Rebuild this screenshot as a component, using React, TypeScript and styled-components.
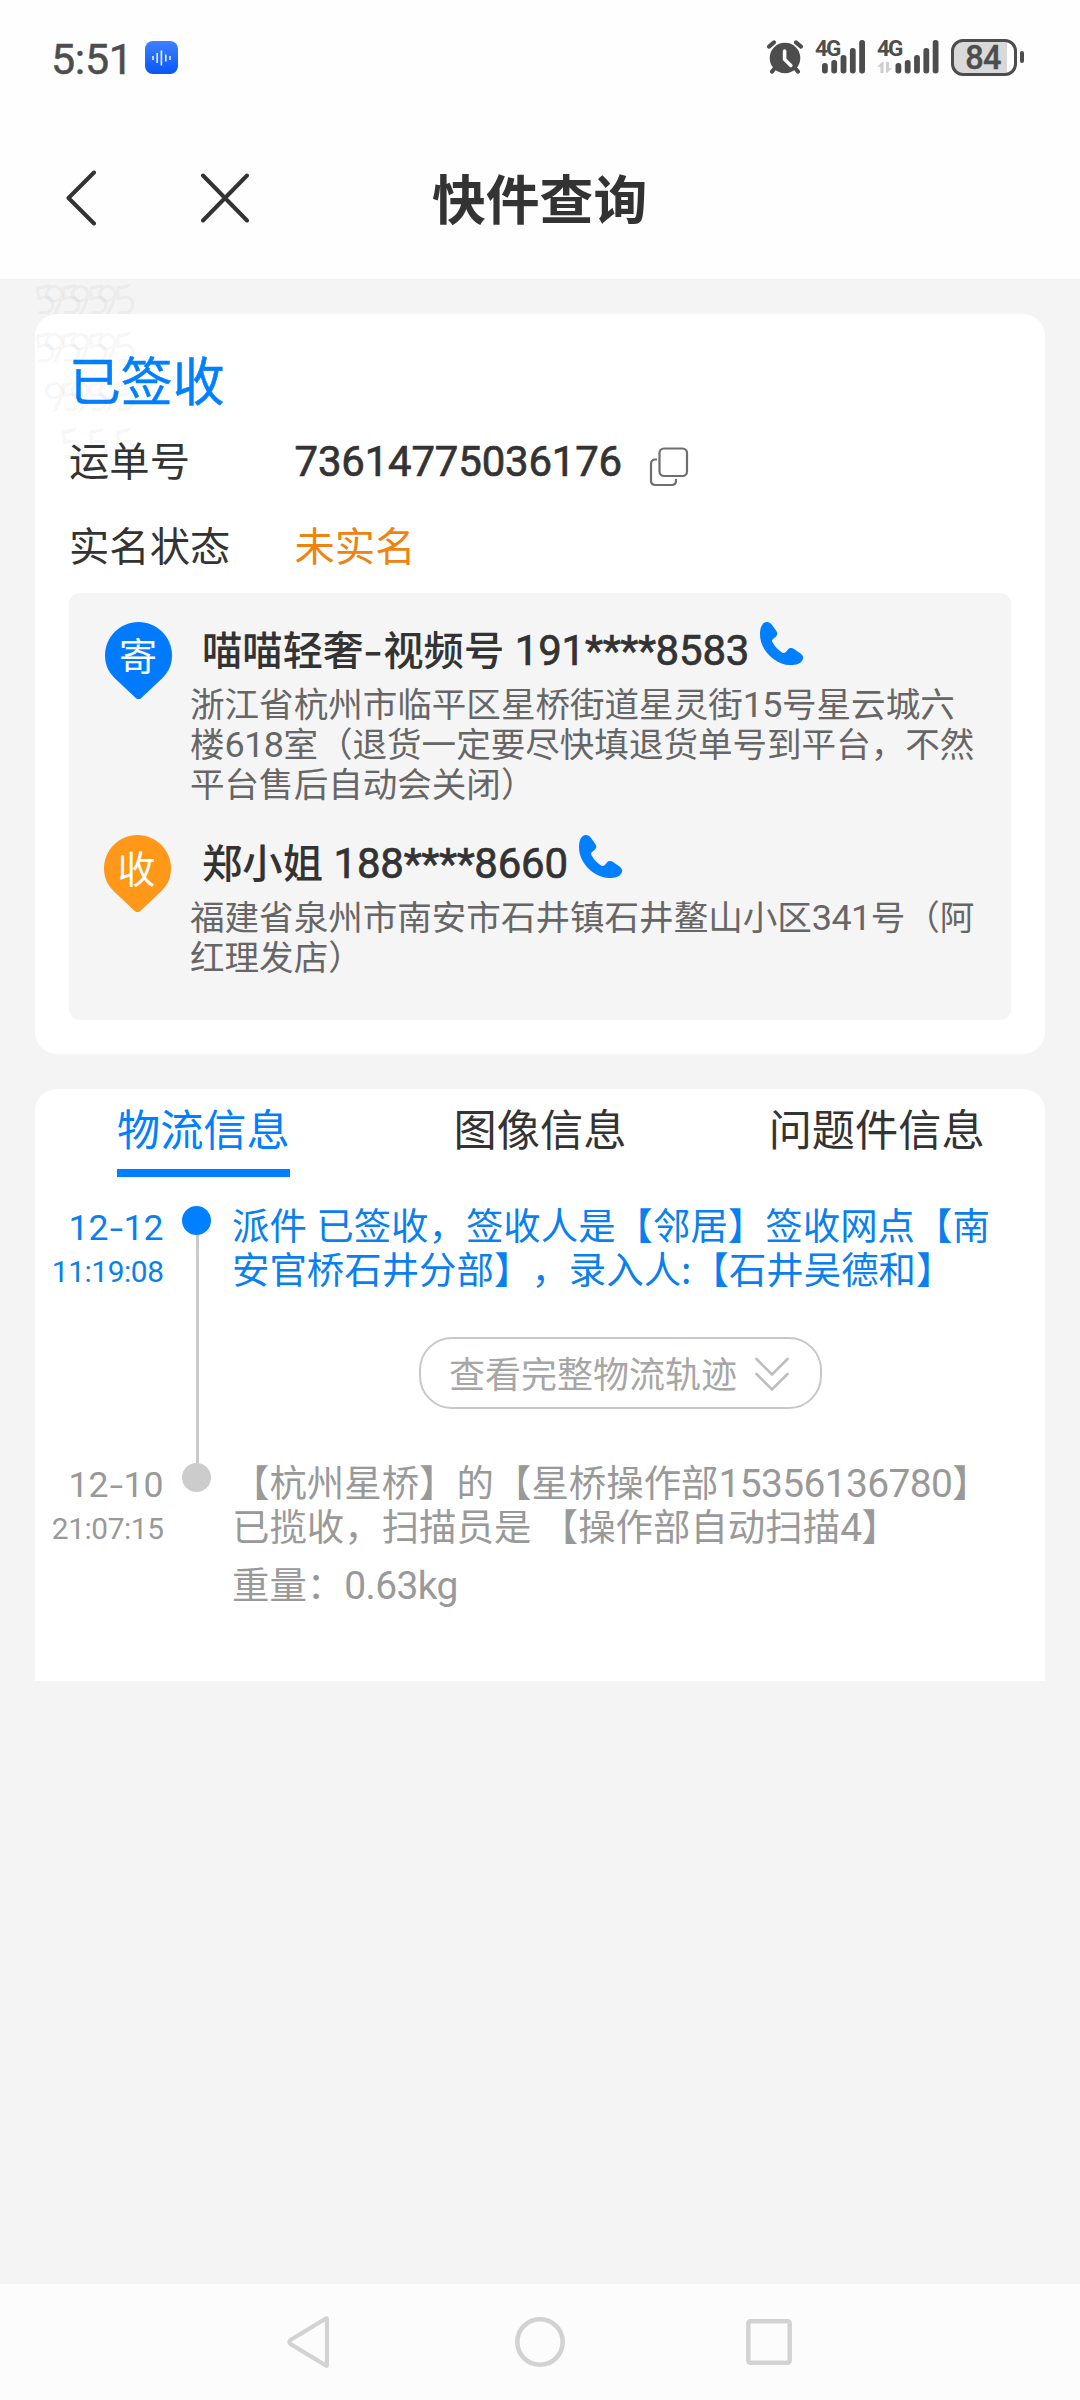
import React from "react";
import styled, { createGlobalStyle } from "styled-components";

const CJK = '"Noto Sans CJK SC", "Noto Sans", sans-serif';
const LATIN = 'Roboto, "Noto Sans", sans-serif';
const BLUE = "#0080ff";
const INK = "#333333";

const GlobalStyle = createGlobalStyle`
  * { box-sizing: border-box; }
  body {
    margin: 0;
    background: #f4f4f4;
    font-family: ${CJK};
    color: ${INK};
    text-spacing-trim: space-all;
  }
  svg { display: block; flex: none; }
`;

const Screen = styled.div`
  width: 1080px;
  height: 2400px;
  display: flex;
  flex-direction: column;
  overflow: hidden;
`;

const StatusBar = styled.div`
  height: 116px;
  padding: 0 56px 2px 51px;
  background: #fefefe;
  display: flex;
  align-items: center;
  justify-content: space-between;
`;

const StatusSide = styled.div<{ $gap: number }>`
  display: flex;
  align-items: center;
  gap: ${(p) => p.$gap}px;
`;

const Clock = styled.span`
  width: 79px;
  font: 400 43px/50px ${LATIN};
  letter-spacing: -0.3px;
  color: #4d4d4d;
  -webkit-text-stroke: 0.5px #4d4d4d;
  padding-top: 3px;
  white-space: nowrap;
`;

const SignalBox = styled.div`
  position: relative;
  height: 34px;
`;

const SignalLabel = styled.span`
  position: absolute;
  left: 0;
  top: -1px;
  font: 700 22.5px/18px ${LATIN};
  letter-spacing: -1.8px;
  color: #4d4d4d;
`;

const Battery = styled.div`
  width: 66px;
  height: 37px;
  padding-right: 2px;
  border: 3px solid #4d4d4d;
  border-radius: 12px;
  background: linear-gradient(to right, #d9d9d9 53px, #fefefe 53px);
  font: 500 32.5px/32px ${LATIN};
  letter-spacing: -0.8px;
  color: #4d4d4d;
  -webkit-text-stroke: 0.4px #4d4d4d;
  text-align: center;
`;

const BatteryTip = styled.div`
  width: 4px;
  height: 12px;
  border-radius: 2px;
  background: #4d4d4d;
`;

const NavBar = styled.header`
  height: 163px;
  padding-left: 66px;
  background: #fefefe;
  display: grid;
  grid-template-columns: 135px 231px 1fr;
  align-items: center;
`;

const Title = styled.h1`
  margin: -1px 0 0;
  font-size: 53.8px;
  line-height: 74px;
  font-weight: 700;
`;

const Content = styled.main`
  position: relative;
  flex: 1;
  padding: 35px 35px 0;
  display: flex;
  flex-direction: column;
  gap: 35px;
`;

const Watermark = styled.div`
  position: absolute;
  left: 0;
  top: 0;
  width: 150px;
  height: 190px;
  pointer-events: none;
`;

const WatermarkDigit = styled.span<{ $x: number; $y: number }>`
  position: absolute;
  left: ${(p) => p.$x - 2}px;
  top: ${(p) => p.$y}px;
  font: 400 40px/32px Lato, sans-serif;
  transform: rotate(-12deg);
  color: rgba(0, 0, 0, 0.055);
`;

const SummaryCard = styled.section`
  height: 740px;
  padding: 30px 34.5px 34px 34px;
  background: #fff;
  border-radius: 22px;
`;

const SignedStatus = styled.div`
  font-size: 51.84px;
  line-height: 70px;
  color: ${BLUE};
  -webkit-text-stroke: 0.5px ${BLUE};
`;

const Fields = styled.dl`
  margin: 2px 0 6px;
`;

const Field = styled.div`
  height: 85.5px;
  display: grid;
  grid-template-columns: 225.5px 1fr;
  align-items: center;
  font-size: 40.32px;
  line-height: 58px;
`;

const FieldLabel = styled.dt``;

const FieldValue = styled.dd<{ $tone?: string; $drop?: number }>`
  margin: 0;
  padding-top: ${(p) => p.$drop ?? 0}px;
  display: flex;
  align-items: center;
  color: ${(p) => p.$tone ?? INK};
`;

const Num = styled.span<{ $medium?: boolean }>`
  font-family: ${LATIN};
  font-size: 1.04em;
  line-height: 0;
  font-weight: 400;
  letter-spacing: ${(p) => (p.$medium ? "-0.004em" : "-0.016em")};
  -webkit-text-stroke: ${(p) => (p.$medium ? "0.7px currentColor" : "0")};
`;

const CopyButton = styled.button`
  margin: 5px 0 -5px 26.5px;
  padding: 0;
  border: 0;
  background: none;
`;

const AddressPanel = styled.div`
  height: 427px;
  padding: 28.5px 0 0 36px;
  background: #f5f5f5;
  border-radius: 11px;
`;

const Party = styled.article`
  height: 213.2px;
  display: grid;
  grid-template-columns: 85px 1fr;
`;

const Pin = styled.div<{ $shift: number }>`
  position: relative;
  width: 67px;
  height: 78px;
  margin-left: ${(p) => p.$shift}px;
`;

const PinLabel = styled.span`
  position: absolute;
  left: 0;
  top: 4px;
  width: 66px;
  text-align: center;
  font-size: 38px;
  line-height: 56px;
  color: #fff;
`;

const PartyHead = styled.div`
  display: flex;
  align-items: flex-start;
  height: 52px;
  padding-left: 12px;
  margin-bottom: 8px;
`;

const PartyName = styled.span<{ $width: number }>`
  width: ${(p) => p.$width}px;
  font-size: 40.32px;
  line-height: 51px;
  font-weight: 500;
  word-spacing: 1.5px;
  white-space: nowrap;
`;

const Dash = styled.span<{ $width: number }>`
  display: inline-block;
  width: ${(p) => p.$width}px;
  text-align: center;
  line-height: 0;
  letter-spacing: 0;
  transform: scaleX(1.35);
`;

const Stars = styled.span`
  letter-spacing: -0.4px;
`;

const AddressLine = styled.div`
  font-size: 34.56px;
  line-height: 40px;
  color: #666;
  white-space: nowrap;
`;

const TrackCard = styled.section`
  height: 592px;
  background: #fff;
  border-radius: 22px 22px 0 0;
`;

const Tabs = styled.nav`
  display: grid;
  grid-template-columns: repeat(3, 1fr);
  justify-items: center;
  height: 88px;
`;

const Tab = styled.div<{ $active?: boolean }>`
  font-size: 43.2px;
  line-height: 76px;
  height: 88px;
  padding-bottom: 4px;
  color: ${(p) => (p.$active ? BLUE : INK)};
  border-bottom: 8px solid ${(p) => (p.$active ? BLUE : "transparent")};
`;

const Timeline = styled.div`
  padding-top: 29px;
`;

const Event = styled.div<{ $tone: string; $height: number }>`
  height: ${(p) => p.$height}px;
  display: grid;
  grid-template-columns: 128.5px 28.5px 1fr;
  column-gap: 18px;
  color: ${(p) => p.$tone};
`;

const When = styled.div`
  text-align: right;
  white-space: nowrap;
`;

const Day = styled.div`
  font: 400 35.6px/44px ${LATIN};
  letter-spacing: 0;
`;

const Time = styled.div`
  font: 400 29.8px/43px ${LATIN};
  letter-spacing: -0.4px;
`;

const Rail = styled.div`
  display: flex;
  flex-direction: column;
`;

const Dot = styled.div<{ $color: string }>`
  width: 29px;
  height: 29px;
  border-radius: 50%;
  background: ${(p) => p.$color};
`;

const Line = styled.div`
  flex: 1;
  width: 3px;
  margin-left: 14.5px;
  background: #cacaca;
`;

const Detail = styled.div`
  margin: -4px 0 0 4px;
`;

const DetailLine = styled.div<{ $gap?: number }>`
  margin-top: ${(p) => p.$gap ?? 0}px;
  font-size: 37.44px;
  line-height: 44.3px;
  word-spacing: 1px;
  white-space: nowrap;
`;

const MoreButton = styled.button`
  width: 403px;
  height: 72px;
  margin: 46px 0 0 187px;
  padding: 0 0 2px 28px;
  display: flex;
  align-items: center;
  gap: 17px;
  background: #fff;
  border: 2px solid #c8c8c8;
  border-radius: 33px;
  font-family: ${CJK};
  font-size: 36px;
  line-height: 52px;
  color: #a6a6a6;
`;

const MoreIcon = styled.svg`
  margin-top: 5px;
`;

const SystemNav = styled.footer`
  height: 116px;
  padding: 0 288px 0 287px;
  background: #fcfcfc;
  display: grid;
  grid-template-columns: 228px 1fr auto;
  align-items: center;
`;

const VoiceIcon = () => (
  <svg width="33" height="33" viewBox="0 0 33 33">
    <defs>
      <linearGradient id="voice" x1="0" y1="0" x2="0" y2="1">
        <stop offset="0" stopColor="#3f80ff" />
        <stop offset="1" stopColor="#0656fa" />
      </linearGradient>
    </defs>
    <rect width="33" height="33" rx="8" fill="url(#voice)" />
    <path
      d="M8 15v4M12.2 12v10M16.4 9.5v15M20.8 13.5v7M25 15v4"
      stroke="#e8f1ff"
      strokeWidth="1.6"
    />
  </svg>
);

const AlarmIcon = () => (
  <svg width="36" height="34" viewBox="0 0 36 34">
    <circle cx="18" cy="18" r="15.3" fill="#4d4d4d" />
    <g stroke="#4d4d4d" strokeWidth="4" strokeLinecap="round" fill="none">
      <path d="M2 6.6L7 2.4M34 6.6L29 2.4M8 28L5 31.6M28 28L31 31.6" />
    </g>
    <path d="M17.6 11v8.2l6.2 6.2" fill="none" stroke="#fefefe" strokeWidth="3.6" strokeLinecap="round" strokeLinejoin="round" />
  </svg>
);

const BAR_TOPS = [23, 20, 15, 8, 0];

const Signal = ({ width, first, data }: { width: number; first: number; data?: boolean }) => (
  <SignalBox>
    <svg width={width} height="34" viewBox={`0 0 ${width} 34`}>
      {BAR_TOPS.map((top, i) => (
        <rect key={top} x={first + i * 9.3} y={top} width="5.8" height={33.4 - top} rx="2.7" fill="#4d4d4d" />
      ))}
      {data && <path d="M0 27l5-5h1.6v11H3.4v-6zM9 22h3v6h3l-5 5H9z" fill="#cfcfcf" />}
    </svg>
    <SignalLabel>4G</SignalLabel>
  </SignalBox>
);

const PhoneIcon = () => (
  <svg width="44" height="44" viewBox="0 0 44 44">
    <path
      fill={BLUE}
      d="M7 0C9 0 10.5 1 11.5 2.3L16 8.5C18 11.5 17.5 13 15.5 15L13 17C11.5 18.5 12 19.5 12.8 20.8C15.5 25.5 19 28.7 22 30.5C23.5 31.5 24.8 31.2 25.8 30L28 27.5C29.5 25.8 32 25.7 34 27L40.5 31.5C43 33.3 43.8 35.5 42.6 38C40.5 42 35 43.3 29.5 43.1C17 42.5 0 30 0 12C0 6 2 0 7 0Z"
    />
  </svg>
);

const MapPin = ({ label, color, shift = 0 }: { label: string; color: string; shift?: number }) => (
  <Pin $shift={shift}>
    <svg width="67" height="78" viewBox="0 0 67 78">
      <path fill={color} d="M33.5 0C52 0 67 15 67 33.5C67 44 62.5 51 57 56.5L36 76.2Q33.5 78 31 76.2L10 56.5C4.5 51 0 44 0 33.5C0 15 15 0 33.5 0Z" />
    </svg>
    <PinLabel>{label}</PinLabel>
  </Pin>
);

const WATERMARK_ROWS = [
  { y: 4, fives: [35, 61, 88, 115], nines: [46, 72, 99] },
  { y: 52, fives: [35, 61, 88, 115], nines: [46, 72, 99] },
  { y: 101, fives: [61, 88, 115], nines: [46, 72, 99] },
  { y: 148, fives: [61, 88, 115], nines: [] as number[] },
];

export default function App() {
  return (
    <Screen>
      <GlobalStyle />
      <StatusBar>
        <StatusSide $gap={15}>
          <Clock>5:51</Clock>
          <VoiceIcon />
        </StatusSide>
        <StatusSide $gap={12}>
          <AlarmIcon />
          <Signal width={50} first={7} />
          <Signal width={62} first={18.5} data />
          <StatusSide $gap={3}>
            <Battery>84</Battery>
            <BatteryTip />
          </StatusSide>
        </StatusSide>
      </StatusBar>

      <NavBar>
        <svg width="32" height="56" viewBox="0 0 32 56">
          <path d="M28 2.5L2.5 28L28 53.5" fill="none" stroke={INK} strokeWidth="4" strokeLinecap="round" strokeLinejoin="round" />
        </svg>
        <svg width="48" height="50" viewBox="0 0 48 50">
          <path d="M2 2.5L46 47.5M46 2.5L2 47.5" stroke={INK} strokeWidth="4" strokeLinecap="round" />
        </svg>
        <Title>快件查询</Title>
      </NavBar>

      <Content>
        <SummaryCard>
          <SignedStatus>已签收</SignedStatus>
          <Fields>
            <Field>
              <FieldLabel>运单号</FieldLabel>
              <FieldValue $drop={6}>
                <Num $medium>73614775036176</Num>
                <CopyButton aria-label="复制">
                  <svg width="40" height="40" viewBox="0 0 40 40" fill="none" stroke="#6e6e6e" strokeWidth="2.2">
                    <rect x="10.5" y="1.5" width="27.5" height="27.5" rx="4.5" />
                    <path d="M8 12.5H6.5Q2 12.5 2 17V33.5Q2 38 6.5 38H22.5Q27 38 27 33.5V32" />
                  </svg>
                </CopyButton>
              </FieldValue>
            </Field>
            <Field>
              <FieldLabel>实名状态</FieldLabel>
              <FieldValue $tone="#f0830f">未实名</FieldValue>
            </Field>
          </Fields>
          <AddressPanel>
            <Party>
              <MapPin label="寄" color="#007bff" />
              <div>
                <PartyHead>
                  <PartyName $width={557.5}>
                    喵喵轻奢<Dash $width={20}>-</Dash>视频号{" "}
                    <Num $medium>191<Stars>****</Stars>8583</Num>
                  </PartyName>
                  <PhoneIcon />
                </PartyHead>
                <AddressLine>浙江省杭州市临平区星桥街道星灵街<Num>15</Num>号星云城六</AddressLine>
                <AddressLine>楼<Num>618</Num>室（退货一定要尽快填退货单号到平台，不然</AddressLine>
                <AddressLine>平台售后自动会关闭）</AddressLine>
              </div>
            </Party>
            <Party>
              <MapPin label="收" color="#ff9718" shift={-1.5} />
              <div>
                <PartyHead>
                  <PartyName $width={376.5}>
                    郑小姐 <Num $medium>188<Stars>****</Stars>8660</Num>
                  </PartyName>
                  <PhoneIcon />
                </PartyHead>
                <AddressLine>福建省泉州市南安市石井镇石井鳌山小区<Num>341</Num>号（阿</AddressLine>
                <AddressLine>红理发店）</AddressLine>
              </div>
            </Party>
          </AddressPanel>
        </SummaryCard>

        <TrackCard>
          <Tabs>
            <Tab $active>物流信息</Tab>
            <Tab>图像信息</Tab>
            <Tab>问题件信息</Tab>
          </Tabs>
          <Timeline>
            <Event $tone="#0a7ff0" $height={257}>
              <When>
                <Day>12<Dash $width={15}>-</Dash>12</Day>
                <Time>11:19:08</Time>
              </When>
              <Rail>
                <Dot $color={BLUE} />
                <Line />
              </Rail>
              <Detail>
                <DetailLine>派件 已签收，签收人是【邻居】签收网点【南</DetailLine>
                <DetailLine>安官桥石井分部】，录入人:【石井吴德和】</DetailLine>
                <MoreButton>
                  查看完整物流轨迹
                  <MoreIcon width="36" height="36" viewBox="0 0 36 36" fill="none" stroke="#bdbdbd" strokeWidth="2.6" strokeLinecap="round">
                    <path d="M2.5 3L18 18.5L33.5 3M2.5 18L18 33.5L33.5 18" />
                  </MoreIcon>
                </MoreButton>
              </Detail>
            </Event>
            <Event $tone="#999999" $height={200}>
              <When>
                <Day>12<Dash $width={15}>-</Dash>10</Day>
                <Time>21:07:15</Time>
              </When>
              <Rail>
                <Dot $color="#cccccc" />
              </Rail>
              <Detail>
                <DetailLine>【杭州星桥】的【星桥操作部<Num>15356136780</Num>】</DetailLine>
                <DetailLine>已揽收，扫描员是 【操作部自动扫描<Num>4</Num>】</DetailLine>
                <DetailLine $gap={13}>重量：<Num>0.63kg</Num></DetailLine>
              </Detail>
            </Event>
          </Timeline>
        </TrackCard>

        <Watermark aria-hidden>
          {WATERMARK_ROWS.map((row) => (
            <React.Fragment key={row.y}>
              {row.fives.map((x) => (
                <WatermarkDigit key={`5-${x}`} $x={x} $y={row.y}>5</WatermarkDigit>
              ))}
              {row.nines.map((x) => (
                <WatermarkDigit key={`9-${x}`} $x={x} $y={row.y}>9</WatermarkDigit>
              ))}
            </React.Fragment>
          ))}
        </Watermark>
      </Content>

      <SystemNav>
        <svg width="44" height="52" viewBox="0 0 44 52">
          <path d="M40 3.5V48.5Q40 50.5 38 49L3.5 28Q1.5 26 3.5 24L38 3Q40 1.5 40 3.5Z" fill="none" stroke="#d2d2d2" strokeWidth="4.2" strokeLinejoin="round" />
        </svg>
        <svg width="50" height="50" viewBox="0 0 50 50">
          <circle cx="25" cy="25" r="22.7" fill="none" stroke="#d2d2d2" strokeWidth="4.6" />
        </svg>
        <svg width="46" height="46" viewBox="0 0 46 46">
          <rect x="2.3" y="2.3" width="41.4" height="41.4" rx="2" fill="none" stroke="#d2d2d2" strokeWidth="4.4" />
        </svg>
      </SystemNav>
    </Screen>
  );
}
